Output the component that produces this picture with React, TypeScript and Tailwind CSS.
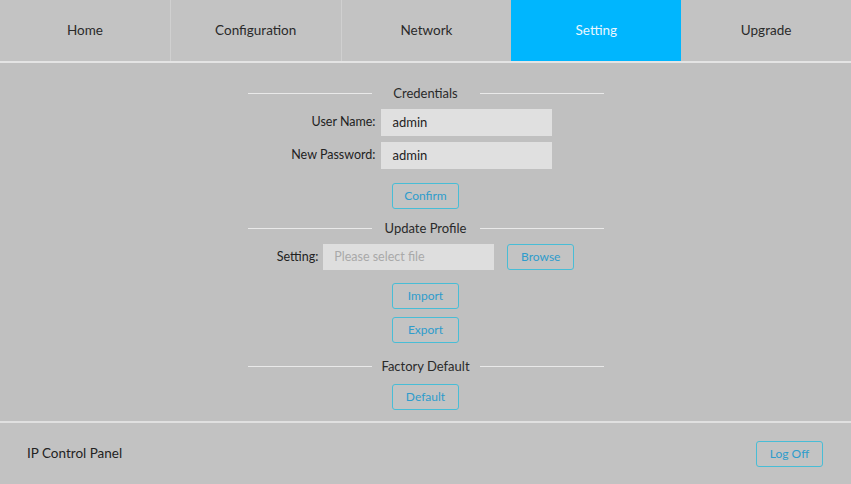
import React from "react";

const font = { fontFamily: "Lato, 'Open Sans', sans-serif" };

function Btn({ children, className = "" }: { children: React.ReactNode; className?: string }) {
  return (
    <button
      className={`h-[26px] w-[67px] rounded-[3px] border border-[#48bdd6] bg-[#c3c3c3] text-[12px] leading-none text-[#2e9ccc] ${className}`}
    >
      {children}
    </button>
  );
}

function Title({ children, className = "" }: { children: React.ReactNode; className?: string }) {
  return (
    <div className={`mx-auto flex h-[20px] w-[356px] items-center ${className}`}>
      <div className="h-px w-[124px] bg-[#e9e9e9]" />
      <div className="flex w-[108px] justify-center whitespace-nowrap text-[13px] leading-[20px] text-[#2a2a2a]">
        {children}
      </div>
      <div className="h-px w-[124px] bg-[#e9e9e9]" />
    </div>
  );
}

export default function App() {
  const tabs = ["Home", "Configuration", "Network", "Setting", "Upgrade"];
  return (
    <div style={font} className="flex h-[484px] w-[851px] flex-col overflow-hidden bg-[#c1c1c1] text-[#222]">
      <nav className="flex h-[61px] bg-[#c3c3c3]">
        {tabs.map((t, i) => (
          <div
            key={t}
            className={`flex flex-1 items-center justify-center text-[13.5px] ${
              t === "Setting" ? "bg-[#00b6fe] text-[#eaf7ff]" : "text-[#2a2a2a]"
            } ${i < 2 ? "border-r border-[#d0d0d0]" : ""}`}
          >
            {t}
          </div>
        ))}
      </nav>
      <div className="h-[2px] bg-[#e4e4e4]" />
      <main className="h-[358px] bg-[#c0c0c0] pt-[20px]">
        <Title>Credentials</Title>
        <div className="mx-auto mt-[6px] flex w-[356px] items-center">
          <div className="w-[128px] text-right text-[12.5px]">User Name:</div>
          <div className="ml-[5px] flex h-[27px] w-[171px] items-center bg-[#e0e0e0] pl-[12px] text-[13px]">admin</div>
        </div>
        <div className="mx-auto mt-[6px] flex w-[356px] items-center">
          <div className="w-[128px] text-right text-[12.5px]">New Password:</div>
          <div className="ml-[5px] flex h-[27px] w-[171px] items-center bg-[#e0e0e0] pl-[12px] text-[13px]">admin</div>
        </div>
        <div className="mt-[14px] flex justify-center">
          <Btn>Confirm</Btn>
        </div>
        <Title className="mt-[9px]">Update Profile</Title>
        <div className="mt-[6px] flex items-center justify-center">
          <div className="text-[12.5px]">Setting:</div>
          <div className="ml-[5px] flex h-[26px] w-[171px] items-center bg-[#dedede] pl-[11px] text-[12.5px] text-[#a9a9a9]">
            Please select file
          </div>
          <Btn className="ml-[13px]">Browse</Btn>
        </div>
        <div className="mt-[13px] flex justify-center">
          <Btn>Import</Btn>
        </div>
        <div className="mt-[8px] flex justify-center">
          <Btn>Export</Btn>
        </div>
        <Title className="mt-[13px]">Factory Default</Title>
        <div className="mt-[8px] flex justify-center">
          <Btn>Default</Btn>
        </div>
      </main>
      <div className="h-[2px] bg-[#e0e0e0]" />
      <footer className="flex flex-1 items-center justify-between bg-[#c2c2c2] pl-[27px] pr-[28px]">
        <div className="text-[13.5px] text-[#222]">IP Control Panel</div>
        <Btn className="w-[66px]">Log Off</Btn>
      </footer>
    </div>
  );
}
